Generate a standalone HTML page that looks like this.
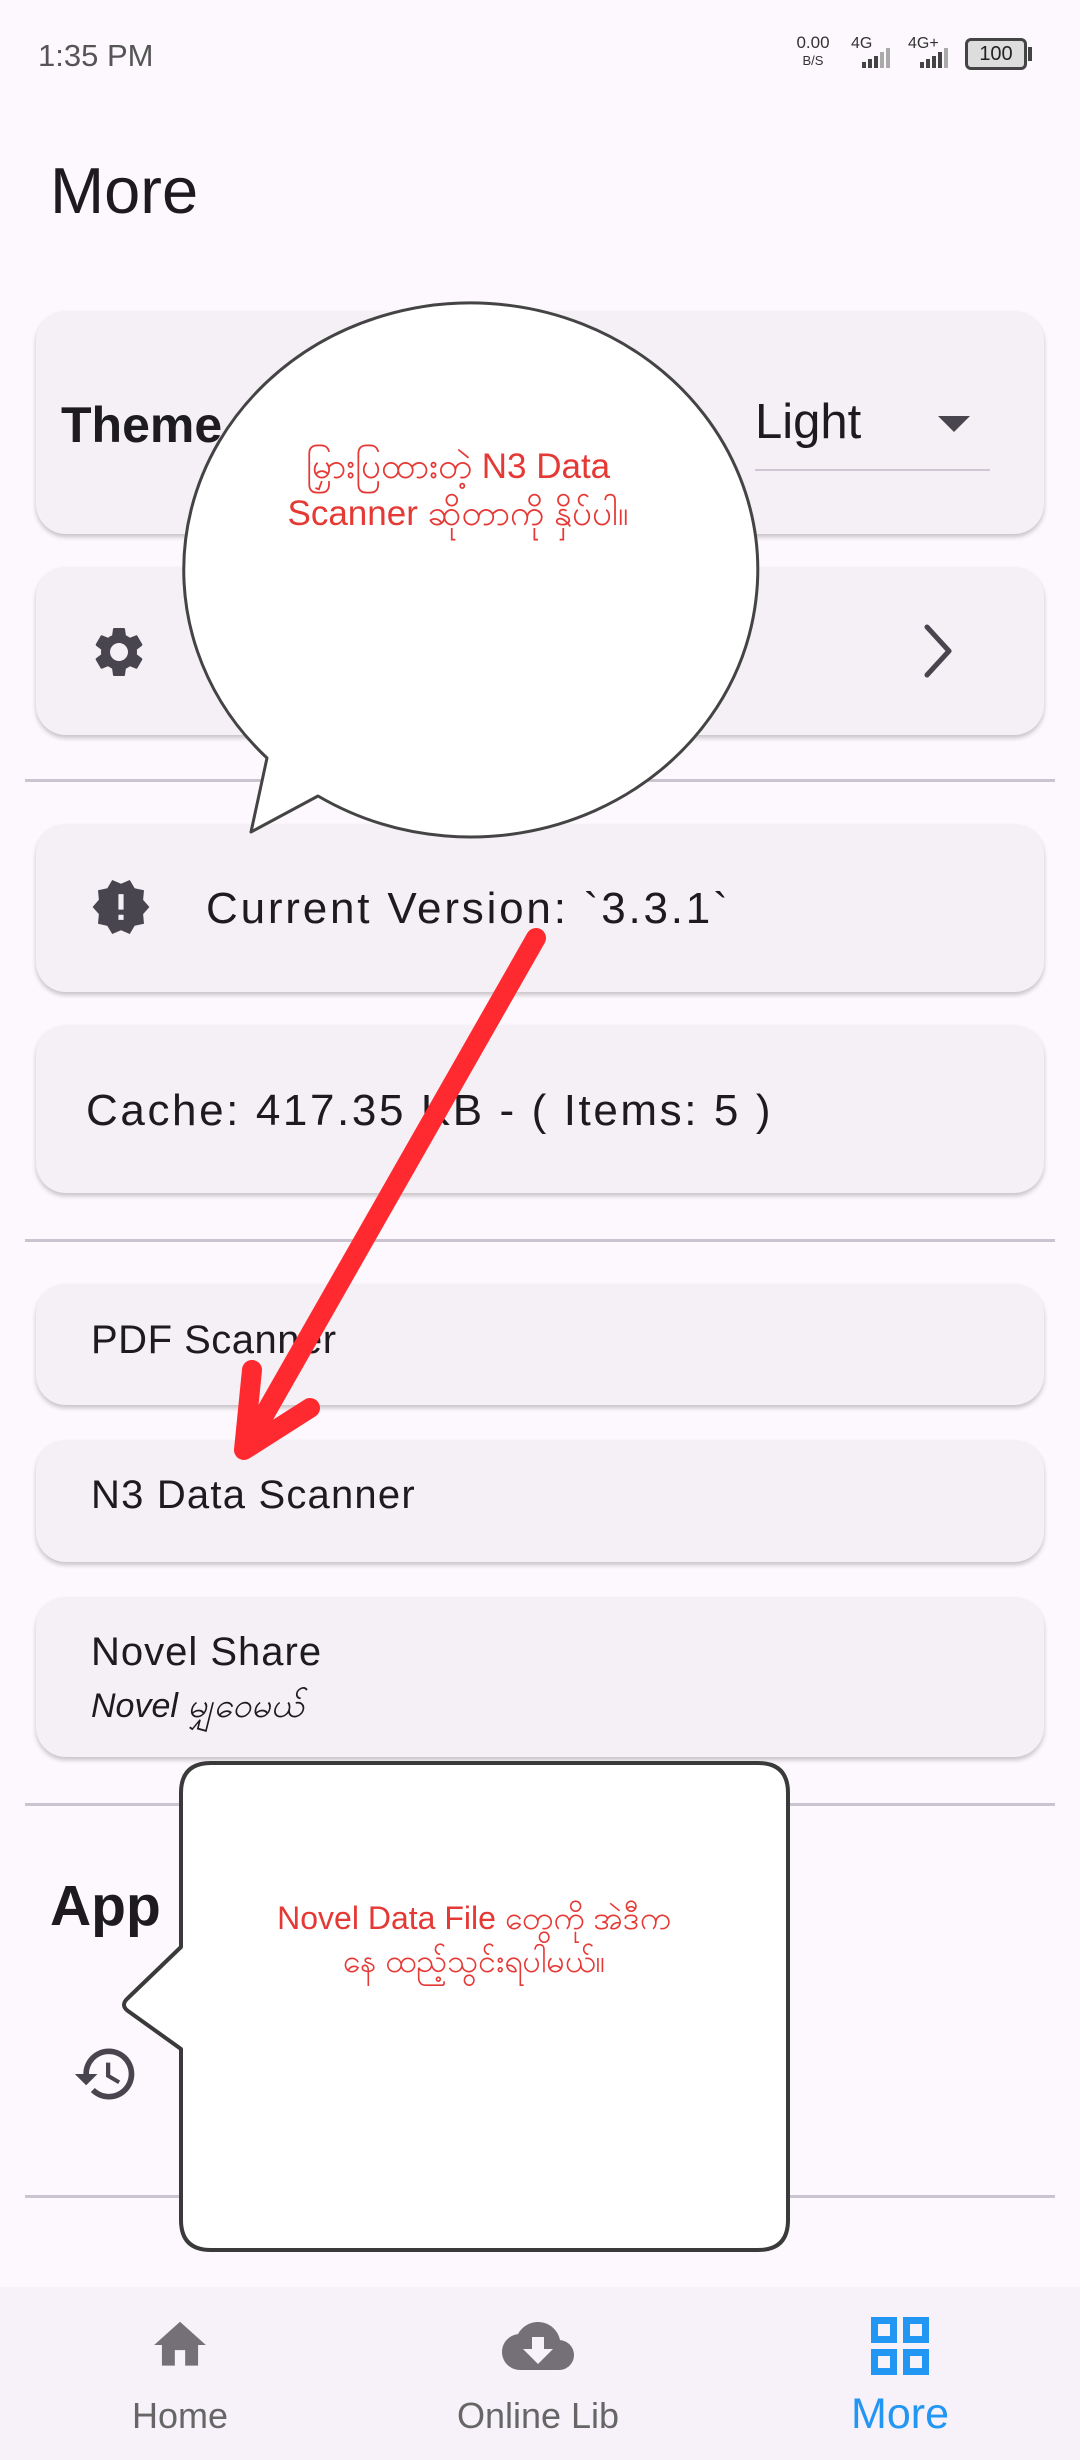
<!DOCTYPE html>
<html><head><meta charset="utf-8"><style>
*{margin:0;padding:0;box-sizing:border-box}
body{width:1080px;height:2460px;background:#fdf8fd;position:relative;overflow:hidden;font-family:"Liberation Sans","DejaVu Sans",sans-serif;color:#1d1b20}
.a{position:absolute}
.card{position:absolute;left:36px;width:1008px;background:#f4f0f6;border-radius:30px;box-shadow:0 3px 5px rgba(0,0,0,.22)}
.t{position:absolute;white-space:nowrap;line-height:1}
.div{position:absolute;left:25px;width:1030px;height:3px;background:#cac4d0}
</style></head><body>

<div class="t" style="left:38px;top:40px;font-size:31px;color:#555">1:35 PM</div>
<div class="t" style="left:793px;top:34px;font-size:17px;color:#333;text-align:center;width:40px">0.00<br><span style="font-size:13px">B/S</span></div>
<div class="t" style="left:851px;top:36px;font-size:16px;color:#333">4G</div>
<svg class="a" style="left:852px;top:42px" width="48" height="28"><g fill="#444"><rect x="10" y="20" width="4" height="6"/><rect x="16" y="17" width="4" height="9"/><rect x="22" y="14" width="4" height="12"/><rect x="28" y="10" width="4" height="16" fill="#aaa"/><rect x="34" y="6" width="4" height="20" fill="#aaa"/></g></svg>
<div class="t" style="left:908px;top:36px;font-size:16px;color:#333">4G+</div>
<svg class="a" style="left:910px;top:42px" width="48" height="28"><g fill="#444"><rect x="10" y="20" width="4" height="6"/><rect x="16" y="17" width="4" height="9"/><rect x="22" y="14" width="4" height="12"/><rect x="28" y="10" width="4" height="16"/><rect x="34" y="6" width="4" height="20" fill="#aaa"/></g></svg>
<div class="a" style="left:965px;top:38px;width:62px;height:32px;border:3px solid #444;border-radius:6px;background:#ddd;font-size:20px;text-align:center;line-height:26px;color:#222">100</div>
<div class="a" style="left:1028px;top:47px;width:4px;height:14px;background:#444"></div>

<div class="t" style="left:50px;top:158px;font-size:65px">More</div>

<div class="card" style="top:311px;height:223px"></div>
<div class="t" style="left:61px;top:400px;font-size:50px;font-weight:bold">Theme</div>
<div class="t" style="left:755px;top:398px;font-size:49px">Light</div>
<svg class="a" style="left:938px;top:416px" width="32" height="18"><path d="M0 0H32L16 16Z" fill="#49454f"/></svg>
<div class="a" style="left:755px;top:469px;width:235px;height:2px;background:#cfc8d4"></div>

<div class="card" style="top:567px;height:168px"></div>
<svg class="a" style="left:89px;top:622px" width="60" height="60" viewBox="0 0 24 24"><path fill="#49454f" d="M19.14 12.94c.04-.3.06-.61.06-.94 0-.32-.02-.64-.07-.94l2.03-1.58c.18-.14.23-.41.12-.61l-1.92-3.32c-.12-.22-.37-.29-.59-.22l-2.39.96c-.5-.38-1.03-.7-1.62-.94l-.36-2.54c-.04-.24-.24-.41-.48-.41h-3.84c-.24 0-.43.17-.47.41l-.36 2.54c-.59.24-1.130.57-1.62.94l-2.39-.96c-.22-.08-.47 0-.59.22L2.74 8.87c-.12.21-.08.47.12.61l2.03 1.58c-.05.3-.09.63-.09.94s.02.64.07.94l-2.03 1.58c-.18.14-.23.41-.12.61l1.920 3.32c.12.22.37.29.59.22l2.39-.96c.5.38 1.03.7 1.62.94l.36 2.54c.05.24.24.41.48.41h3.84c.24 0 .44-.17.47-.41l.36-2.54c.59-.24 1.13-.56 1.62-.94l2.39.96c.22.08.47 0 .59-.22l1.92-3.32c.12-.22.07-.47-.12-.61l-2.01-1.58zM12 15.6c-1.98 0-3.6-1.62-3.6-3.6s1.62-3.6 3.6-3.6 3.6 1.62 3.6 3.6-1.62 3.6-3.6 3.6z"/></svg>
<svg class="a" style="left:915px;top:621px" width="44" height="60"><path d="M12 6L34 30L12 54" fill="none" stroke="#49454f" stroke-width="5" stroke-linecap="round" stroke-linejoin="round"/></svg>

<div class="div" style="top:779px"></div>

<div class="card" style="top:824px;height:168px"></div>
<svg class="a" style="left:90px;top:876px" width="62" height="62" viewBox="0 0 24 24"><path fill="#49454f" d="M23 12l-2.44-2.78.34-3.68-3.61-.82-1.89-3.18L12 3 8.6 1.54 6.710 4.72l-3.61.81.34 3.68L1 12l2.44 2.78-.34 3.69 3.61.82 1.89 3.18L12 21l3.4 1.46 1.89-3.18 3.61-.82-.34-3.68L23 12zm-10 5h-2v-2h2v2zm0-4h-2V7h2v6z"/></svg>
<div class="t" style="left:206px;top:887px;font-size:44px;letter-spacing:2.8px">Current Version: `3.3.1`</div>

<div class="card" style="top:1025px;height:168px"></div>
<div class="t" style="left:86px;top:1089px;font-size:44px;letter-spacing:2.6px">Cache: 417.35 KB - ( Items: 5 )</div>

<div class="div" style="top:1239px"></div>

<div class="card" style="top:1284px;height:121px"></div>
<div class="t" style="left:91px;top:1320px;font-size:40px;letter-spacing:0.5px">PDF Scanner</div>
<div class="card" style="top:1440px;height:122px"></div>
<div class="t" style="left:91px;top:1475px;font-size:40px;letter-spacing:1.2px">N3 Data Scanner</div>
<div class="card" style="top:1597px;height:160px"></div>
<div class="t" style="left:91px;top:1632px;font-size:40px;letter-spacing:1px">Novel Share</div>
<div class="t" style="left:91px;top:1689px;font-size:34px;font-style:italic">Novel မျှဝေမယ်</div>

<div class="div" style="top:1803px"></div>
<div class="t" style="left:50px;top:1878px;font-size:57px;font-weight:bold">App</div>
<svg class="a" style="left:72px;top:2040px" width="68" height="68" viewBox="0 0 24 24"><path fill="#49454f" d="M13 3c-4.97 0-9 4.03-9 9H1l3.89 3.89.07.14L9 12H6c0-3.87 3.13-7 7-7s7 3.13 7 7-3.13 7-7 7c-1.93 0-3.68-.79-4.940-2.06l-1.42 1.42C8.27 19.99 10.51 21 13 21c4.97 0 9-4.03 9-9s-4.03-9-9-9zm-1 5v5l4.28 2.54.72-1.21-3.5-2.08V8H12z"/></svg>
<div class="div" style="top:2195px"></div>

<div class="a" style="left:0;top:2287px;width:1080px;height:173px;background:#f7f1f9"></div>
<svg class="a" style="left:149px;top:2314px" width="62" height="62" viewBox="0 0 24 24"><path fill="#757077" d="M10 20v-6h4v6h5v-8h3L12 3 2 12h3v8z"/></svg>
<div class="t" style="left:130px;top:2398px;font-size:36px;color:#666;width:100px;text-align:center">Home</div>
<svg class="a" style="left:502px;top:2310px" width="72" height="72" viewBox="0 0 24 24"><path fill="#757077" d="M19.35 10.04C18.67 6.59 15.640 4 12 4 9.11 4 6.6 5.64 5.35 8.04 2.34 8.36 0 10.91 0 14c0 3.31 2.69 6 6 6h13c2.76 0 5-2.24 5-5 0-2.64-2.05-4.78-4.65-4.96zM17 13l-5 5-5-5h3V9h4v4h3z"/></svg>
<div class="t" style="left:438px;top:2398px;font-size:36px;color:#666;width:200px;text-align:center">Online Lib</div>
<svg class="a" style="left:871px;top:2317px" width="58" height="58"><g fill="none" stroke="#2196f3" stroke-width="7"><rect x="3.5" y="3.5" width="19" height="19"/><rect x="35.5" y="3.5" width="19" height="19"/><rect x="3.5" y="35.5" width="19" height="19"/><rect x="35.5" y="35.5" width="19" height="19"/></g></svg>
<div class="t" style="left:840px;top:2393px;font-size:43px;color:#2196f3;width:120px;text-align:center">More</div>

<svg class="a" style="left:0;top:0" width="1080" height="2460">
<path d="M267 758 L251 832 L318 796 A287 267 0 1 0 267 758 Z" fill="#fff" stroke="#444" stroke-width="3" stroke-linejoin="round"/>
<path d="M211 1763 H758 Q788 1763 788 1793 V2220 Q788 2250 758 2250 H211 Q181 2250 181 2220 V2049 L128 2011 Q120 2005 128 1998 L181 1947 V1793 Q181 1763 211 1763 Z" fill="#fff" stroke="#3a3a3a" stroke-width="4" stroke-linejoin="round"/>
<g stroke="#ff2a2f" stroke-width="20" stroke-linecap="round" fill="none">
<path d="M536 938 L250 1440"/>
<path d="M252 1370 L244 1450 L310 1408" stroke-linejoin="round"/>
</g>
<text x="458" y="478" font-size="35" fill="#e53935" text-anchor="middle" font-family="Liberation Sans, sans-serif">မြှားပြထားတဲ့ N3 Data</text>
<text x="458" y="525" font-size="35" fill="#e53935" text-anchor="middle" font-family="Liberation Sans, sans-serif">Scanner ဆိုတာကို နှိပ်ပါ။</text>
<text x="474" y="1929" font-size="32" fill="#e53935" text-anchor="middle" font-family="Liberation Sans, sans-serif">Novel Data File တွေကို အဲဒီက</text>
<text x="474" y="1972" font-size="32" fill="#e53935" text-anchor="middle" font-family="Liberation Sans, sans-serif">နေ ထည့်သွင်းရပါမယ်။</text>
</svg>
</body></html>
